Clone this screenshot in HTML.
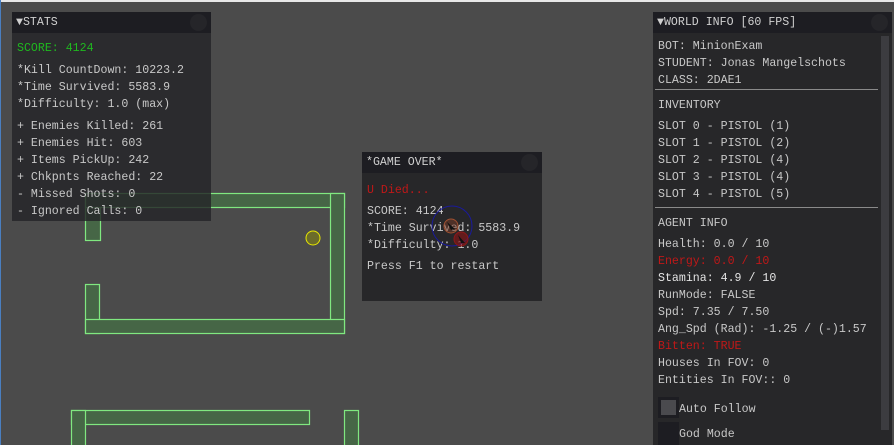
<!DOCTYPE html>
<html><head><style>
html,body{margin:0;padding:0;width:894px;height:445px;overflow:hidden;background:#4b4b4b;}
body{position:relative;font-family:"Liberation Mono","DejaVu Sans Mono",monospace;font-size:11.6px;color:#c8c8c8;}
.p{position:absolute;background:rgba(37,37,40,0.96);}
.h{position:absolute;left:0;right:0;top:0;height:21px;background:#1d1d22;}
.h span{position:absolute;left:4px;top:4px;line-height:14px;color:#d0d0d0;}
.h i{position:absolute;right:4px;top:2px;width:17px;height:17px;border-radius:50%;background:#252529;}
.t{position:absolute;white-space:pre;line-height:14px;}
.g{color:#1fb81f}.r{color:#c01818}.w{color:#e4e4e4}
.sep{position:absolute;height:1px;background:#8a8a8a;}
</style></head><body>
<div style="position:absolute;left:0;top:0;width:894px;height:2px;background:#e8e8e8"></div>
<div style="position:absolute;left:0;top:0;width:1px;height:445px;background:#4a7fc0"></div>
<svg width="894" height="445" style="position:absolute;left:0;top:0">
<g fill="#466646" stroke="#80e880" stroke-width="1.2">
<rect x="85.5" y="193.5" width="15" height="47"/>
<rect x="85.5" y="193.5" width="259" height="14"/>
<rect x="330.5" y="193.5" width="14" height="140"/>
<rect x="85.5" y="284.5" width="14" height="49"/>
<rect x="85.5" y="319.5" width="259" height="14"/>
<rect x="71.5" y="410.5" width="238" height="14"/>
<rect x="71.5" y="410.5" width="14" height="40"/>
<rect x="344.5" y="410.5" width="14" height="40"/>
</g>
<circle cx="313" cy="238" r="7" fill="#6b6b2a" stroke="#e8e800"/>
</svg>
<div class="p" style="left:12px;top:12px;width:199px;height:209px;background:rgba(37,37,40,0.82)">
<div class="h"><span>▼STATS</span><i></i></div>
<div class="t g" style="left:5px;top:30px">SCORE: 4124</div>
<div class="t" style="left:5px;top:50px;line-height:17px">*Kill CountDown: 10223.2
*Time Survived: 5583.9
*Difficulty: 1.0 (max)</div>
<div class="t" style="left:5px;top:106px;line-height:17px">+ Enemies Killed: 261
+ Enemies Hit: 603
+ Items PickUp: 242
+ Chkpnts Reached: 22
- Missed Shots: 0
- Ignored Calls: 0</div>
</div>
<div class="p" style="left:362px;top:152px;width:180px;height:149px">
<div class="h"><span>*GAME OVER*</span><i></i></div>
<div class="t r" style="left:5px;top:32px">U Died...</div>
<div class="t" style="left:5px;top:51px;line-height:17px">SCORE: 4124
*Time Survived: 5583.9
*Difficulty: 1.0</div>
<div class="t" style="left:5px;top:108px">Press F1 to restart</div>
</div>
<svg width="894" height="445" style="position:absolute;left:0;top:0">
<circle cx="452" cy="226" r="20" fill="none" stroke="#1a1a9a" stroke-width="1"/>
<circle cx="451" cy="226" r="7" fill="rgba(120,60,40,0.5)" stroke="#a05030"/>
<circle cx="461" cy="239" r="7" fill="rgba(140,20,20,0.6)" stroke="#901818"/>
<path d="M447 222 L455 229 L451 230 Z" fill="#111"/>
<path d="M458 235 L465 243 L461 243 Z" fill="#111"/>
</svg>
<div class="p" style="left:653px;top:12px;width:239px;height:433px">
<div class="h"><span>▼WORLD INFO [60 FPS]</span><i></i></div>
<div style="position:absolute;left:228px;top:24px;width:8px;height:394px;background:#3c3c40"></div>
<div class="t" style="left:5px;top:26px;line-height:17px">BOT: MinionExam
STUDENT: Jonas Mangelschots
CLASS: 2DAE1</div>
<div class="sep" style="left:2px;width:223px;top:77px"></div>
<div class="t" style="left:5px;top:87px">INVENTORY</div>
<div class="t" style="left:5px;top:106px;line-height:17px">SLOT 0 - PISTOL (1)
SLOT 1 - PISTOL (2)
SLOT 2 - PISTOL (4)
SLOT 3 - PISTOL (4)
SLOT 4 - PISTOL (5)</div>
<div class="sep" style="left:2px;width:223px;top:195px"></div>
<div class="t" style="left:5px;top:205px">AGENT INFO</div>
<div class="t" style="left:5px;top:224px;line-height:17px">Health: 0.0 / 10
<span class="r">Energy: 0.0 / 10</span>
<span class="w">Stamina: 4.9 / 10</span>
RunMode: FALSE
Spd: 7.35 / 7.50
Ang_Spd (Rad): -1.25 / (-)1.57
<span class="r">Bitten: TRUE</span>
Houses In FOV: 0
Entities In FOV:: 0</div>
<div style="position:absolute;left:5px;top:385px;width:21px;height:21px;background:#1d1d22"><div style="margin:3px;width:15px;height:15px;background:#4a4a4e"></div></div>
<div class="t" style="left:26px;top:391px">Auto Follow</div>
<div style="position:absolute;left:5px;top:410px;width:21px;height:23px;background:#1d1d22"></div>
<div class="t" style="left:26px;top:416px">God Mode</div>
</div>
</body></html>
